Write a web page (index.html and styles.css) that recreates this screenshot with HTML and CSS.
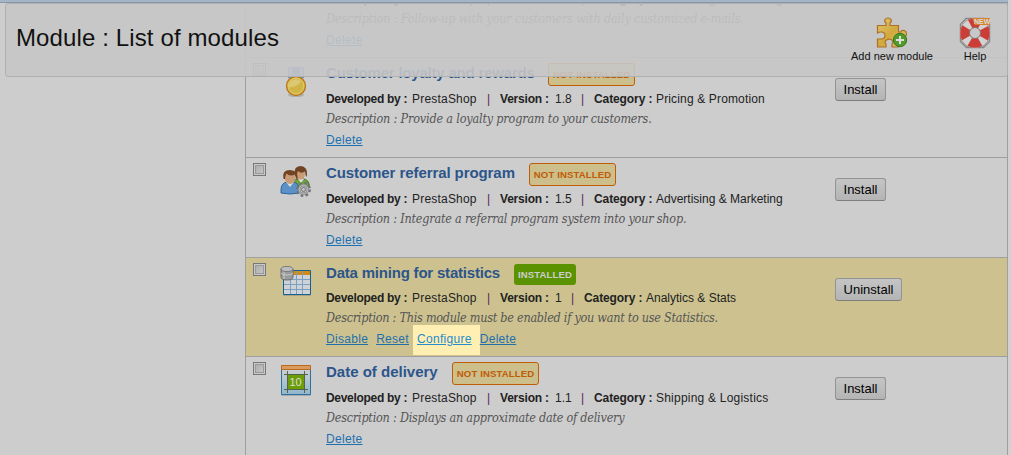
FILE: index.html
```html
<!DOCTYPE html>
<html lang="en">
<head>
<meta charset="utf-8">
<title>Module : List of modules</title>
<link rel="stylesheet" href="styles.css">
</head>
<body>
<div class="page">
  <main class="modules">
    <section class="row">
      <input type="checkbox" class="check"><span class="icon"></span>
      <div class="info">
        <div class="head"><h2>Customer follow-up</h2></div>
        <p class="meta"><b class="dev">Developed by :</b><span class="author">PrestaShop</span><i>|</i><b class="ver">Version :</b><span class="num">1.5</span><i>|</i><b class="cat">Category :</b><span>Advertising &amp; Marketing</span></p>
        <p class="desc d0">Description : Follow-up with your customers with daily customized e-mails.</p>
        <div class="links"><a>Delete</a></div>
      </div>
    </section>
    <section class="row">
      <input type="checkbox" class="check">
      <svg class="icon" viewBox="0 0 32 32"><path d="M8.500 1.500h15v10l-7.500 5-7.500-5z" fill="#8aa6d0" stroke="#4d78b3"/><path d="M12 2h8v11h-8z" fill="#526dac"/><ellipse cx="16" cy="29" rx="8" ry="2" fill="#999" opacity=".6"/><circle cx="16" cy="20" r="9.500" fill="#d5b645" stroke="#b77821" stroke-width="1.300"/><circle cx="16" cy="20" r="7.800" fill="#d0b446" stroke="#e3c967"/><path d="M9 21.500a7 7 0 0 1 12-6q-3 5-12 6" fill="#dcc774"/></svg>
      <div class="info">
        <div class="head"><h2 class="t1">Customer loyalty and rewards</h2><span class="badge">NOT INSTALLED</span></div>
        <p class="meta"><b class="dev">Developed by :</b><span class="author">PrestaShop</span><i>|</i><b class="ver">Version :</b><span class="num">1.8</span><i>|</i><b class="cat">Category :</b><span class="loose">Pricing &amp; Promotion</span></p>
        <p class="desc d1">Description : Provide a loyalty program to your customers.</p>
        <div class="links"><a>Delete</a></div>
      </div>
      <button>Install</button>
    </section>
    <section class="row">
      <input type="checkbox" class="check">
      <svg class="icon" viewBox="0 0 32 32">
        <path d="M12 21q0-8 6-8h5q6 0 6.500 8z" fill="#719f3b" stroke="#43712b"/><path d="M18 13l3 4 3-4z" fill="#ddd"/>
        <ellipse cx="20.500" cy="8" rx="4.500" ry="5.500" fill="#c79c77"/><path d="M15 10Q13 0 20.500 0q7.500 0 6.500 11-2-2-2-5.500-4 2.500-7-.5-1 1-1 5" fill="#704322"/>
        <path d="M1 27v-3q0-7 6-8h6q6 1 6 8v3q-9 2-18 0" fill="#5b91c7" stroke="#2b649c"/><path d="M6 16l4 5 4-5z" fill="#ddd"/>
        <ellipse cx="10" cy="11.500" rx="5.500" ry="6.500" fill="#c79c77"/><path d="M3.500 13Q1.500 4 10 4t7.500 10q-2-2-2.500-5.500-5 2.500-8.500-1Q5 10 5 13" fill="#704322"/>
        <circle cx="23.500" cy="23.500" r="6" fill="none" stroke="#717477" stroke-width="3" stroke-dasharray="2.500 2.210"/><circle cx="23.500" cy="23.500" r="4.300" fill="#ccc" stroke="#808386" stroke-width="2.500"/><circle cx="23.500" cy="23.500" r="4.300" fill="none" stroke="#b5b7b9" stroke-width="1.200"/><circle cx="23.500" cy="23.500" r="2" fill="#c4c4c4" stroke="#717477"/>
      </svg>
      <div class="info">
        <div class="head"><h2 class="t2">Customer referral program</h2><span class="badge">NOT INSTALLED</span></div>
        <p class="meta"><b class="dev">Developed by :</b><span class="author">PrestaShop</span><i>|</i><b class="ver">Version :</b><span class="num">1.5</span><i>|</i><b class="cat">Category :</b><span>Advertising &amp; Marketing</span></p>
        <p class="desc d2">Description : Integrate a referral program system into your shop.</p>
        <div class="links"><a>Delete</a></div>
      </div>
      <button>Install</button>
    </section>
    <section class="row active">
      <input type="checkbox" class="check">
      <svg class="icon" viewBox="0 0 32 32">
        <path d="M3.500 4.500h27v24h-27z" fill="#cdd3d9" stroke="#14618f"/><path d="M4 5h26v4H4z" fill="#d18b19"/><path d="M10.500 9v19M16.500 5v23M22.500 5v23M4 13.500h26M4 18.500h26M4 23.500h26" stroke="#7c9fbd"/><path d="M3 29.500h28" stroke="#777" opacity=".4"/>
        <path d="M1 3v8q0 3 6 3t6-3V3" fill="#9a9b9d" stroke="#6b6d70"/><path d="M1 7q1 2 6 2t6-2M4 5v8" fill="none" stroke="#c8c8c8"/><ellipse cx="7" cy="3" rx="6" ry="2.600" fill="#bdbdbe" stroke="#77797c"/>
      </svg>
      <div class="info">
        <div class="head"><h2 class="t3">Data mining for statistics</h2><span class="badge on">INSTALLED</span></div>
        <p class="meta"><b class="dev">Developed by :</b><span class="author">PrestaShop</span><i>|</i><b class="ver">Version :</b><span class="digit">1</span><i>|</i><b class="cat">Category :</b><span>Analytics &amp; Stats</span></p>
        <p class="desc d3">Description : This module must be enabled if you want to use Statistics.</p>
        <div class="links"><a>Disable</a><a>Reset</a><a class="focus">Configure</a><a>Delete</a></div>
      </div>
      <button class="wide">Uninstall</button>
    </section>
    <section class="row">
      <input type="checkbox" class="check">
      <svg class="icon" viewBox="0 0 32 32">
        <defs><linearGradient id="cal" x1="0" y1="0" x2="0" y2="1"><stop stop-color="#d2d2d2"/><stop offset="1" stop-color="#91b7ce"/></linearGradient></defs>
        <path d="M1.500 1.500h29v28h-29z" fill="url(#cal)" stroke="#2b72a0"/><path d="M1 30.500h30" stroke="#888" opacity=".5"/><path d="M1.500 .5h29v4h-29z" fill="#d99b5c" stroke="#bb6820"/><path d="M7 9h18v16H7z" fill="#6b9d04"/><path d="M4 9.500h24M4 24.500h24M7.500 6v22M24.500 6v22" stroke="#55634e"/>
        <text x="15.500" y="21" text-anchor="middle" class="day">10</text>
      </svg>
      <div class="info">
        <div class="head"><h2 class="t4">Date of delivery</h2><span class="badge">NOT INSTALLED</span></div>
        <p class="meta"><b class="dev">Developed by :</b><span class="author">PrestaShop</span><i>|</i><b class="ver">Version :</b><span class="num">1.1</span><i>|</i><b class="cat">Category :</b><span class="looser">Shipping &amp; Logistics</span></p>
        <p class="desc d4">Description : Displays an approximate date of delivery</p>
        <div class="links"><a>Delete</a></div>
      </div>
      <button>Install</button>
    </section>
  </main>
  <header class="toolbar">
    <h1>Module : List of modules</h1>
    <nav class="tools">
      <a class="tool">
        <svg viewBox="0 0 32 32"><defs><linearGradient id="pz" x1="0" y1="0" x2="1" y2="1"><stop stop-color="#dfc574"/><stop offset=".5" stop-color="#d2a93b"/><stop offset="1" stop-color="#dec681"/></linearGradient></defs>
          <path d="M1.500 8.500h8.500V6q-2-1-1-3.500Q10 1 12 1t3 1.500Q16 5 14 6v2.500h8.500V15h2q1-2 4-1.500 2 1 2 3.500t-2 3h-6v10H16v-3q2-3-1-4.500-3-1-5 1t0 3.500v3H1.500v-8H5q4 0 4-3.500T5 15q-2 0-3.500 1z" fill="url(#pz)" stroke="#ac7028" stroke-width="1.200"/>
          <circle cx="24" cy="23" r="6.700" fill="#519b2b" stroke="#36751b"/><path d="M24 19v8M20 23h8" stroke="#ddd" stroke-width="2"/></svg>
        <span>Add new module</span>
      </a>
      <a class="tool help">
        <svg viewBox="0 0 32 32"><path d="M7 1.500h18l5.500 6v17l-6 6h-17l-6-6v-17z" fill="none" stroke="#85898a" stroke-width="1.500"/>
          <ellipse cx="16" cy="29.500" rx="10" ry="1.500" fill="#888" opacity=".5"/><circle cx="16" cy="16" r="10" fill="none" stroke="#8f4440" stroke-width="10"/><circle cx="16" cy="16" r="10" fill="none" stroke="#d1d3d2" stroke-width="9.500"/><circle cx="16" cy="16" r="10" fill="none" stroke="#cc3d38" stroke-width="9.500" stroke-dasharray="10.500 5.208" stroke-dashoffset="5.250"/><circle cx="16" cy="16" r="5.500" fill="#c8c8c8" stroke="#86716e"/>
          <path d="M13 1h18v7H16z" fill="#d3832d"/><text x="15" y="7.300" class="new">NEW</text></svg>
        <span>Help</span>
      </a>
    </nav>
  </header>
</div>
</body>
</html>
```
FILE: styles.css
```css
* { box-sizing: border-box; }
body { margin: 0; background: #cdcdcd; font-family: "Liberation Sans", Arial, sans-serif; color: #222; }
h1, h2, p { margin: 0; font-weight: normal; }
.page { position: relative; width: 1011px; height: 455px; overflow: hidden; border-right: 3px solid #d1d1d1; }
.modules { margin: -43px -1px 0 245px; width: 763px; border: solid #9f9f9f; border-width: 0 1px; }
.row { display: grid; grid-template-columns: 27px 46px 509px auto; height: 100px; padding-left: 7px; border-top: 1px solid #9f9f9f; justify-content: start; align-items: start; }
.row.active { height: 99px; background: #cdc28f; border-color: #a2a1a0; }
.check { appearance: none; width: 13px; height: 13px; margin: 5px 0 0; border: 1px solid #777; background: linear-gradient(135deg, #a6a6a6, #ccc); box-shadow: inset 0 0 0 1px #c9c9c9, inset 0 0 0 2px #999; }
.icon { display: block; width: 32px; height: 32px; margin: 8px 0 0; }
.info { white-space: nowrap; }
.head { display: flex; align-items: flex-start; gap: 14px; height: 34px; padding-top: 5px; }
h2 { font-size: 15px; line-height: 20px; font-weight: bold; color: #2c558b; }
.t1 { width: 208px; letter-spacing: -.2px; }
.t2 { width: 189px; letter-spacing: -.08px; }
.t3 { width: 174px; letter-spacing: -.2px; }
.t4 { width: 112px; }
.badge { display: block; height: 23px; width: 87px; border: 1px solid #bf5c05; border-radius: 3px; background: #cdbf8c; color: #bf5c05; font-size: 9.6px; line-height: 21px; font-weight: bold; text-align: center; letter-spacing: .1px; }
.badge.on { margin-top: 1px; width: 62px; height: 21px; border: 0; background: #5a9200; color: #cdcdcd; }
.meta { display: flex; font-size: 12px; line-height: 14px; }
.dev { width: 86px; letter-spacing: -.3px; }
.ver { width: 55px; letter-spacing: -.2px; }
.cat { width: 62px; letter-spacing: -.1px; }
.author { width: 65px; letter-spacing: .2px; }
.num { width: 16px; }
.digit { width: 6px; }
.loose { letter-spacing: .15px; }
.looser { letter-spacing: .22px; }
.meta i { width: 23px; text-align: center; font-style: normal; color: #5e235e; }
.desc { font: italic 12.5px/20px "DejaVu Serif Condensed", "DejaVu Serif", serif; color: #555; height: 22px; padding-top: 3px; }
.d0 { letter-spacing: -.15px; }
.d1 { letter-spacing: -.17px; }
.d2 { letter-spacing: -.2px; }
.d3 { letter-spacing: -.25px; }
.d4 { letter-spacing: -.22px; }
.links { display: flex; gap: 8px; font-size: 12px; line-height: 18px; padding-top: 3px; letter-spacing: .3px; }
.links a { color: #1e70ae; text-decoration: underline; }
.active .head { height: 33px; }
.links .focus { margin: -5px -8px -7px -4px; padding: 5px 8px 7px 4px; background: #ffefb3; color: #268ccd; }
button { width: 51px; height: 23px; margin-top: 20px; padding: 0; border: 1px solid #939393; border-bottom-color: #7e7e7e; border-radius: 3px; background: linear-gradient(#c5c5c5, #b4b4b4); font: 13px "Liberation Sans", Arial, sans-serif; color: #000; }
button.wide { width: 67px; }
.day { font: 11px "Liberation Sans", sans-serif; fill: #ddd; }
.toolbar { position: absolute; left: 0; top: 0; width: 1008px; height: 77px; padding: 3px 0 0 5px; border-top: 2px solid #a5b5c8; box-shadow: inset 0 1px #8496ac; display: flex; justify-content: space-between; }
.toolbar::before { content: ""; position: absolute; left: 5px; right: 0; top: 1px; bottom: 0; border: 1px solid #b0b0b0; border-radius: 3px; background: rgba(199, 199, 199, .9); }
.toolbar > * { position: relative; }
h1 { padding: 18px 0 0 11px; font-size: 24px; line-height: 30px; letter-spacing: .12px; color: #111; }
.tools { display: flex; padding: 9px 17px 0 0; gap: 25px; }
.tool { display: flex; flex-direction: column; align-items: center; width: 84px; font-size: 11px; line-height: 16px; color: #111; white-space: nowrap; }
.tool svg { width: 32px; height: 32px; margin: 3px 0 -1px; flex: none; }
.help { width: 32px; }
.new { font: bold 7px "Liberation Sans", sans-serif; fill: #ddd; }
```
